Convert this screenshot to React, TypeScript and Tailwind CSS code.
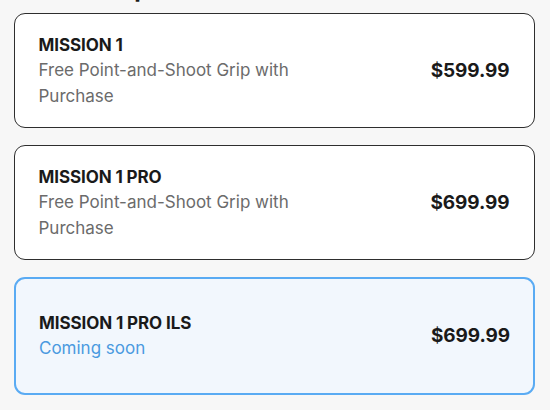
import React from 'react';

type Product = {
    name: string;
    note: string;
    price: string;
    soon?: boolean;
};

const products: Product[] = [
    { name: 'MISSION 1', note: 'Free Point-and-Shoot Grip with Purchase', price: '$599.99' },
    { name: 'MISSION 1 PRO', note: 'Free Point-and-Shoot Grip with Purchase', price: '$699.99' },
    { name: 'MISSION 1 PRO ILS', note: 'Coming soon', price: '$699.99', soon: true },
];

export default function App() {
    return (
        <div
            className="w-[550px] h-[410px] overflow-hidden bg-[#f7f7f7] text-[#1a1a1a]"
            style={{ fontFamily: 'Inter, "Noto Sans", sans-serif' }}
        >
            {/* Heading, scrolled mostly out of view */}
            <h2 className="-mt-[24px] h-[26px] pl-[19px] text-[24px] leading-[26px] font-bold">Choose a product</h2>

            <div className="flex flex-col gap-[17px] pl-[14px] pr-[15px] pt-[11px]">
                {products.map((p) => (
                    <div
                        key={p.name}
                        className={`flex items-center justify-between rounded-[11px] ${p.soon
                            ? 'min-h-[118px] border-2 border-[#5aabf3] bg-[#f2f7fd] pl-[23px] pr-[23px]'
                            : 'min-h-[115px] border-[1.5px] border-[#2e2e2e] bg-white pl-[23.5px] pr-[24.5px]'
                            }`}
                    >
                        <div className="w-[280px]">
                            <div className="text-[17px] leading-[24px] font-bold tracking-[-0.1px]">{p.name}</div>
                            <div
                                className={`text-[17px] leading-[26px] ${p.soon ? 'text-[#4a9ae0]' : 'text-[#6b6b6b]'}`}
                            >
                                {p.note}
                            </div>
                        </div>
                        <div className="text-[19px] leading-[24px] font-bold tracking-[-0.1px]">{p.price}</div>
                    </div>
                ))}
            </div>
        </div>
    );
}
